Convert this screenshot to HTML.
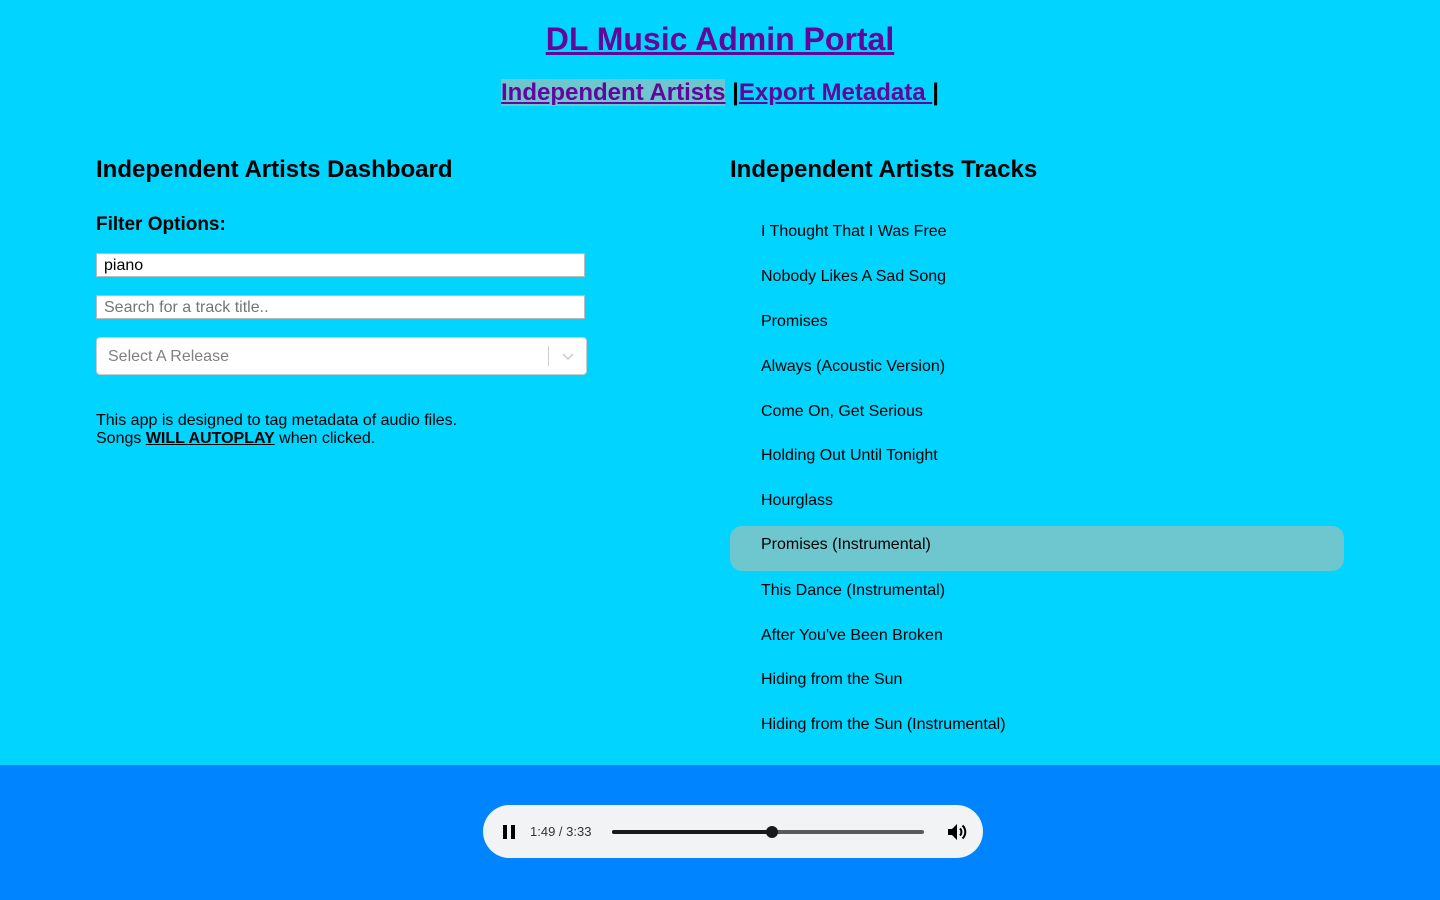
<!DOCTYPE html>
<html><head><meta charset="utf-8"><style>
*{box-sizing:border-box}
body{margin:0;width:1440px;height:900px;background:#00d4ff;font-family:"Liberation Sans",Arial,sans-serif;position:relative;overflow:hidden;color:#000}
a{color:#63069b}
.t{position:absolute;left:0;width:1440px;text-align:center;top:21px;font-size:32px;font-weight:bold;margin:0}
.nav{position:absolute;left:0;width:1440px;text-align:center;top:79px;font-size:24px;font-weight:bold}
.nav .hl{background:#6ec6cf}
h2{position:absolute;margin:0;font-size:24px;font-weight:bold}
.inp{position:absolute;left:96px;width:489px;height:24px;background:#fff;border:1px solid #bbb;font-size:16px;padding:3px 7px;line-height:18px}
.sel{position:absolute;left:96px;top:337px;width:491px;height:38px;background:#fff;border:1px solid #ccc;border-radius:4px;font-size:16px;color:#808080;padding:10px 11px}
.sel .sep{position:absolute;right:37px;top:8px;width:1px;height:20px;background:#ccc}
.info{position:absolute;left:96px;top:412px;font-size:16px;line-height:18px}
.row{position:absolute;left:730px;width:614px;height:44px;font-size:16px;padding-left:31px;line-height:44px;border-radius:12px}
.row.on{background:#6ec6cf}
.foot{position:absolute;left:0;top:765px;width:1440px;height:135px;background:#0084ff}
.pl{position:absolute;left:483px;top:805px;width:500px;height:53px;background:#f1f3f4;border-radius:27px}
</style></head><body>
<h1 class="t"><a href="#">DL Music Admin Portal</a></h1>
<div class="nav"><a href="#" class="hl">Independent Artists</a> |<a href="#">Export Metadata </a>|</div>
<h2 style="left:96px;top:156px">Independent Artists Dashboard</h2>
<h2 style="left:730px;top:156px">Independent Artists Tracks</h2>
<div style="position:absolute;left:96px;top:214px;font-size:19px;font-weight:bold">Filter Options:</div>
<div class="inp" style="top:253px">piano</div>
<div class="inp" style="top:295px;color:#757575">Search for a track title..</div>
<div class="sel">Select A Release<div class="sep"></div>
<svg style="position:absolute;right:12px;top:13px" width="12" height="10" viewBox="0 0 12 10"><path d="M1 3l5 5 5-5" fill="none" stroke="#ccc" stroke-width="1.5"/></svg></div>
<div class="info">This app is designed to tag metadata of audio files.<br>Songs <b><u>WILL AUTOPLAY</u></b> when clicked.</div>
<div class="row" style="top:210px">I Thought That I Was Free</div>
<div class="row" style="top:255px">Nobody Likes A Sad Song</div>
<div class="row" style="top:300px">Promises</div>
<div class="row" style="top:345px">Always (Acoustic Version)</div>
<div class="row" style="top:390px">Come On, Get Serious</div>
<div class="row" style="top:434px">Holding Out Until Tonight</div>
<div class="row" style="top:479px">Hourglass</div>
<div class="row on" style="top:526px;line-height:38px;height:45px">Promises (Instrumental)</div>
<div class="row" style="top:569px">This Dance (Instrumental)</div>
<div class="row" style="top:614px">After You've Been Broken</div>
<div class="row" style="top:658px">Hiding from the Sun</div>
<div class="row" style="top:703px">Hiding from the Sun (Instrumental)</div>
<div class="foot"></div>
<div class="pl">
<div style="position:absolute;left:20px;top:20px;width:4px;height:14px;background:#000"></div>
<div style="position:absolute;left:28px;top:20px;width:4px;height:14px;background:#000"></div>
<div style="position:absolute;left:47px;top:19px;font-size:13px;color:#333">1:49 / 3:33</div>
<div style="position:absolute;left:129px;top:25px;width:312px;height:4px;background:#5a5a5a;border-radius:2px"></div>
<div style="position:absolute;left:129px;top:25px;width:160px;height:4px;background:#1a1a1a;border-radius:2px"></div>
<div style="position:absolute;left:283px;top:21px;width:12px;height:12px;background:#1a1a1a;border-radius:50%"></div>
<svg style="position:absolute;left:464px;top:18px" width="20" height="18" viewBox="0 0 20 18"><path d="M1 6h4l5-5v16l-5-5H1z" fill="#000"/><path d="M13 5.5a5 5 0 0 1 0 7" fill="none" stroke="#000" stroke-width="2"/><path d="M15.5 2.5a9 9 0 0 1 0 13" fill="none" stroke="#000" stroke-width="2"/></svg>
</div>
</body></html>
